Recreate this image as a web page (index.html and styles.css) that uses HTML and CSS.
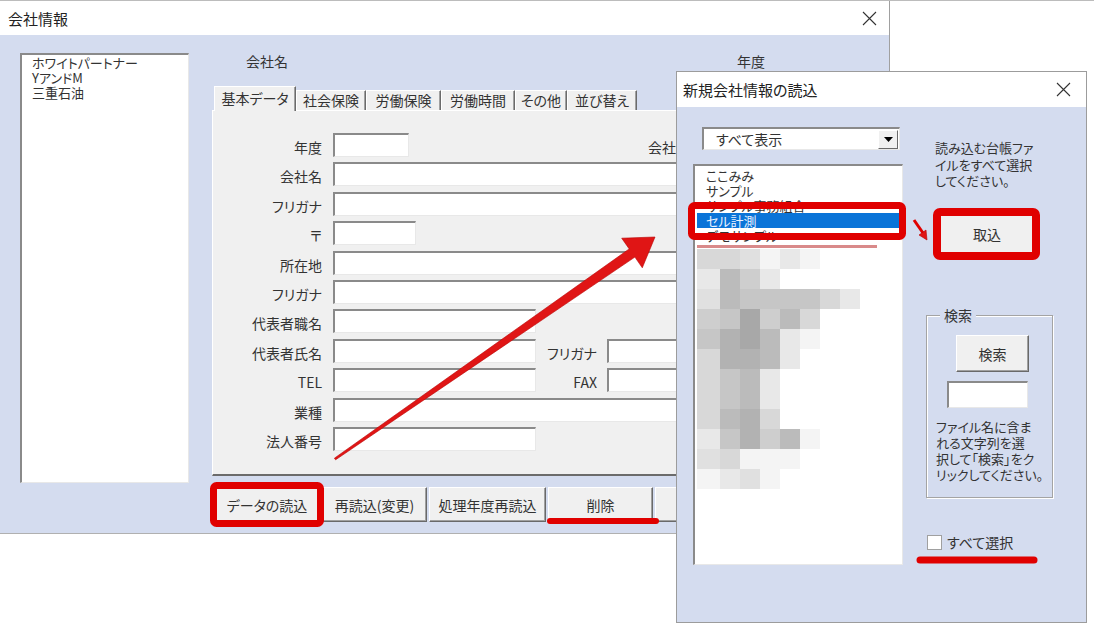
FILE: index.html
```html
<!DOCTYPE html>
<html lang="ja">
<head>
    <meta charset="UTF-8">
    <title>会社情報</title>
    <link rel="stylesheet" href="styles.css">
</head>
<body>
<div class="desktop">

    <!-- main form -->
    <div class="main-win">
        <div class="titlebar">
            <span>会社情報</span>
            <svg class="close" width="15" height="15" viewBox="0 0 15 15"><path d="M1 1L14 14M14 1L1 14"/></svg>
        </div>
        <div class="main-body">
            <div class="listbox company-list">
                <div class="item">ホワイトパートナー</div>
                <div class="item">YアンドM</div>
                <div class="item">三重石油</div>
            </div>
            <div class="main-right">
                <div class="head-row">
                    <span class="head-name">会社名</span>
                    <span>年度</span>
                </div>
                <div class="tabs">
                    <div class="tab active t1">基本データ</div>
                    <div class="tab t2">社会保険</div>
                    <div class="tab t3">労働保険</div>
                    <div class="tab t4">労働時間</div>
                    <div class="tab t5">その他</div>
                    <div class="tab t6">並び替え</div>
                </div>
                <div class="tab-panel">
                    <div class="form">
                        <div class="row"><span class="lbl">年度</span><span class="field w-year"></span><span class="lbl-code">会社コード</span></div>
                        <div class="row"><span class="lbl">会社名</span><span class="field w-full"></span></div>
                        <div class="row"><span class="lbl">フリガナ</span><span class="field w-full"></span></div>
                        <div class="row"><span class="lbl">〒</span><span class="field w-zip"></span></div>
                        <div class="row"><span class="lbl">所在地</span><span class="field w-full"></span></div>
                        <div class="row"><span class="lbl">フリガナ</span><span class="field w-full"></span></div>
                        <div class="row"><span class="lbl">代表者職名</span><span class="field w-mid"></span></div>
                        <div class="row"><span class="lbl">代表者氏名</span><span class="field w-mid"></span><span class="lbl2">フリガナ</span><span class="field w-side"></span></div>
                        <div class="row"><span class="lbl">TEL</span><span class="field w-mid"></span><span class="lbl2">FAX</span><span class="field w-side"></span></div>
                        <div class="row"><span class="lbl">業種</span><span class="field w-full"></span></div>
                        <div class="row"><span class="lbl">法人番号</span><span class="field w-mid"></span></div>
                    </div>
                </div>
                <div class="btn-row">
                    <button class="btn b1">データの読込</button>
                    <button class="btn b2">再読込(変更)</button>
                    <button class="btn b3">処理年度再読込</button>
                    <button class="btn b4">削除</button>
                    <button class="btn b5">終了</button>
                </div>
            </div>
        </div>
    </div>

    <!-- import dialog -->
    <div class="dialog">
        <div class="titlebar dlg-title">
            <span>新規会社情報の読込</span>
            <svg class="close" width="15" height="15" viewBox="0 0 15 15"><path d="M1 1L14 14M14 1L1 14"/></svg>
        </div>
        <div class="dlg-body">
            <div class="dlg-left">
                <div class="combo">
                    <span class="combo-text">すべて表示</span>
                    <span class="combo-btn"><svg width="9" height="5" viewBox="0 0 9 5"><path d="M0 0H9L4.5 5Z"/></svg></span>
                </div>
                <div class="listbox file-list">
                    <div class="item">ここみみ</div>
                    <div class="item">サンプル</div>
                    <div class="item">サンプル事務組合</div>
                    <div class="item selected">セル計測</div>
                    <div class="item">デモサンプル</div>
                    <div class="mosaic">
                        <div class="mrow"><i class="m4"></i><i class="m4"></i><i class="m3"></i><i class="m1"></i><i class="m2"></i><i class="m1"></i></div>
                        <div class="mrow"><i class="m2"></i><i class="m7"></i><i class="m5"></i><i class="m2"></i></div>
                        <div class="mrow"><i class="m3"></i><i class="m7"></i><i class="m6"></i><i class="m6"></i><i class="m6"></i><i class="m6"></i><i class="m4"></i><i class="m2"></i></div>
                        <div class="mrow"><i class="m5"></i><i class="m6"></i><i class="m9"></i><i class="m5"></i><i class="m7"></i><i class="m4"></i></div>
                        <div class="mrow"><i class="m6"></i><i class="m8"></i><i class="m9"></i><i class="m7"></i><i class="m2"></i><i class="m1"></i></div>
                        <div class="mrow"><i class="m4"></i><i class="m8"></i><i class="m8"></i><i class="m7"></i><i class="m2"></i></div>
                        <div class="mrow"><i class="m4"></i><i class="m6"></i><i class="m7"></i><i class="m2"></i></div>
                        <div class="mrow"><i class="m4"></i><i class="m6"></i><i class="m7"></i><i class="m2"></i></div>
                        <div class="mrow"><i class="m4"></i><i class="m7"></i><i class="m8"></i><i class="m4"></i></div>
                        <div class="mrow"><i class="m2"></i><i class="m6"></i><i class="m8"></i><i class="m5"></i><i class="m7"></i><i class="m1"></i></div>
                        <div class="mrow"><i class="m3"></i><i class="m4"></i><i class="m1"></i><i class="m1"></i><i class="m1"></i></div>
                        <div class="mrow"><i class="m1"></i><i class="m2"></i><i class="m3"></i><i class="m1"></i></div>
                    </div>
                </div>
            </div>
            <div class="dlg-right">
                <div class="note">読み込む台帳ファ<br>イルをすべて選択<br>してください。</div>
                <button class="btn btn-import">取込</button>
                <div class="group">
                    <span class="legend">検索</span>
                    <button class="btn btn-search">検索</button>
                    <span class="field search-field"></span>
                    <div class="group-note">ファイル名に含ま<br>れる文字列を選<br>択して「検索」をク<br>リックしてください。</div>
                </div>
                <div class="check-row">
                    <span class="checkbox"></span>
                    <span>すべて選択</span>
                </div>
            </div>
        </div>
    </div>

    <!-- red annotations -->
    <svg class="marks" width="1094" height="629" viewBox="0 0 1094 629">
        <polygon class="arrow" points="334.4,458.2 629.2,248.9 621.7,238.2 655,237 642.3,267.8 634.9,257.1 335.6,459.8"/>
        <rect class="box" x="213.5" y="485.5" width="107" height="38" rx="3"/>
        <line class="under" x1="550" y1="521" x2="656" y2="521"/>
        <rect class="box" x="691.5" y="205.5" width="211" height="31" rx="3"/>
        <rect class="pink" x="697" y="245" width="180" height="3"/>
        <path class="small-arrow" d="M914 220L923 233"/>
        <polygon class="arrow" points="919,235 927,240 926,230"/>
        <rect class="box thick" x="937" y="212" width="99" height="44" rx="3"/>
        <line class="under wide" x1="920" y1="560" x2="1034" y2="560"/>
    </svg>
</div>
</body>
</html>
```

FILE: styles.css
```css
body {
    margin: 0;
    font-family: "Noto Sans CJK JP", "Noto Sans", sans-serif;
    font-feature-settings: "palt";
    color: #333;
}
.desktop {
    position: relative;
    width: 1094px;
    height: 629px;
    box-sizing: border-box;
    border-top: 1px solid #bcbcbc;
    background: #fff;
    overflow: hidden;
}

/* window chrome */
.main-win {
    width: 890px;
    box-sizing: border-box;
    border-right: 1px solid #a0a0a0;
    border-bottom: 1px solid #b0b0b0;
}
.titlebar {
    height: 34px;
    display: flex;
    align-items: center;
    justify-content: space-between;
    padding: 0 12px 0 8px;
    background: #fff;
    font-size: 15px;
    color: #222;
}
.close path {
    stroke: #333;
    stroke-width: 1.1;
    fill: none;
}
.main-body {
    height: 498px;
    box-sizing: border-box;
    display: flex;
    padding: 18px 0 0 20px;
    background: #d4dcef;
}

/* sunken boxes */
.listbox, .field, .combo {
    box-sizing: border-box;
    background: #fff;
    border-top: 2px solid #8a8a8a;
    border-left: 2px solid #8a8a8a;
    border-right: 1px solid #e8e8e8;
    border-bottom: 1px solid #e8e8e8;
}
.item {
    font-size: 13px;
    line-height: 15px;
    white-space: nowrap;
    color: #333;
}
.company-list {
    width: 169px;
    height: 430px;
    padding: 0 0 0 10px;
}

.main-right {
    margin-left: 23px;
    width: 662px;
}
.head-row {
    height: 34px;
    display: flex;
    font-size: 14px;
    line-height: 16px;
}
.head-name {
    width: 525px;
    padding-left: 34px;
    box-sizing: border-box;
}

/* tabs */
.tabs {
    height: 23px;
    display: flex;
    align-items: flex-end;
    padding-left: 2px;
    position: relative;
    z-index: 1;
}
.tab {
    height: 20px;
    box-sizing: border-box;
    background: #f0f0f0;
    border-top: 1px solid #fff;
    border-left: 1px solid #fff;
    border-right: 1px solid #6b6b6b;
    box-shadow: inset -1px 0 #a0a0a0;
    font-size: 14px;
    line-height: 19px;
    text-align: center;
    white-space: nowrap;
}
.tab.active {
    height: 25px;
    margin-bottom: -1px;
    line-height: 22px;
}
.t1 { width: 82px; }
.t2 { width: 70px; }
.t3 { width: 75px; }
.t4 { width: 74px; }
.t5 { width: 52px; }
.t6 { width: 70px; }

.tab-panel {
    height: 366px;
    box-sizing: border-box;
    background: #f0f0f0;
    border-top: 1px solid #fff;
    border-left: 1px solid #fff;
    border-bottom: 2px solid #6b6b6b;
    padding-top: 22px;
}
.form {
    display: grid;
    grid-auto-rows: 24px;
    row-gap: 5.4px;
}
.row {
    display: flex;
    align-items: flex-end;
}
.lbl {
    width: 109px;
    flex-shrink: 0;
    text-align: right;
    font-size: 14px;
    line-height: 20px;
}
.lbl2 {
    width: 61px;
    flex-shrink: 0;
    text-align: right;
    font-size: 14px;
    line-height: 20px;
    margin-right: 10px;
}
.lbl-code {
    margin-left: 239px;
    font-size: 14px;
    line-height: 20px;
    white-space: nowrap;
}
.form .field {
    height: 24px;
    flex-shrink: 0;
}
.lbl + .field { margin-left: 11px; }
.w-year { width: 76px; }
.w-zip { width: 83px; }
.w-mid { width: 203px; }
.w-full { width: 520px; }
.w-side { width: 200px; }

/* buttons */
.btn {
    box-sizing: border-box;
    margin: 0;
    padding: 0;
    background: #f0f0f0;
    border-top: 1px solid #fff;
    border-left: 1px solid #fff;
    border-right: 1px solid #696969;
    border-bottom: 1px solid #696969;
    box-shadow: inset -1px -1px #a0a0a0;
    font-family: inherit;
    font-feature-settings: "palt";
    font-size: 14px;
    color: #333;
    white-space: nowrap;
}
.btn-row {
    margin-top: 11px;
    display: flex;
    gap: 2px;
    padding-left: 2px;
}
.btn-row .btn { height: 35px; }
.b1 { width: 106px; }
.b2 { width: 105px; }
.b3 { width: 117px; }
.b4 { width: 105px; }
.b5 { width: 105px; }

/* dialog */
.dialog {
    position: absolute;
    left: 676px;
    top: 70px;
    width: 411px;
    height: 552px;
    box-sizing: border-box;
    border: 1px solid #9c9c9c;
    display: flex;
    flex-direction: column;
}
.dlg-title {
    height: 35px;
    padding: 0 15px 0 6px;
}
.dlg-body {
    flex: 1;
    display: flex;
    padding-left: 16px;
    background: #d4dcef;
}
.dlg-left {
    width: 210px;
}
.combo {
    margin: 20px 0 0 9px;
    width: 198px;
    height: 23px;
    display: flex;
    align-items: center;
    justify-content: space-between;
    padding-left: 12px;
    font-size: 14px;
}
.combo-btn {
    width: 20px;
    height: 19px;
    box-sizing: border-box;
    background: #f0f0f0;
    border-top: 1px solid #fff;
    border-left: 1px solid #fff;
    border-right: 1px solid #696969;
    border-bottom: 1px solid #696969;
    display: flex;
    align-items: center;
    justify-content: center;
    margin-right: 1px;
}
.combo-btn path { fill: #000; }
.file-list {
    margin-top: 14px;
    width: 210px;
    height: 401px;
    padding-top: 1.5px;
    overflow: hidden;
}
.file-list .item {
    margin: 0 2px;
    padding-left: 9px;
}
.file-list .selected {
    background: #0a74d8;
    color: #eaf2ff;
}
.mosaic {
    margin: 6.5px 0 0 2px;
}
.mrow {
    display: flex;
    height: 20px;
}
.mrow i {
    width: 20px;
    height: 20px;
}
.mrow i:first-child { width: 23px; }
.m1 { background: #f4f4f4; }
.m2 { background: #e8e8e8; }
.m3 { background: #e0e0e0; }
.m4 { background: #d8d8d8; }
.m5 { background: #cecece; }
.m6 { background: #c6c6c6; }
.m7 { background: #bbbbbb; }
.m8 { background: #b2b2b2; }
.m9 { background: #a8a8a8; }

.dlg-right {
    margin-left: 23px;
    width: 127px;
    display: flex;
    flex-direction: column;
}
.note {
    margin-top: 33px;
    padding-left: 9px;
    font-size: 13px;
    line-height: 16.7px;
    white-space: nowrap;
}
.btn-import {
    margin: 24px 0 0 14px;
    width: 94px;
    height: 40px;
}
.group {
    position: relative;
    margin-top: 61px;
    height: 183px;
    box-sizing: border-box;
    border: 1px solid #a4a4a4;
    box-shadow: inset 1px 1px 0 #fff, 1px 1px 0 #fff;
    padding-top: 19px;
    display: flex;
    flex-direction: column;
}
.legend {
    position: absolute;
    top: -10px;
    left: 13px;
    padding: 0 4px;
    background: #d4dcef;
    font-size: 14px;
    line-height: 18px;
}
.btn-search {
    margin-left: 29px;
    width: 73px;
    height: 37px;
}
.search-field {
    margin: 9px 0 0 20px;
    width: 81px;
    height: 27px;
}
.group-note {
    margin-top: 11px;
    padding-left: 9px;
    font-size: 13px;
    line-height: 16px;
    white-space: nowrap;
}
.check-row {
    margin-top: 36px;
    display: flex;
    align-items: center;
    gap: 5px;
    font-size: 14px;
    line-height: 16px;
}
.checkbox {
    width: 15px;
    height: 15px;
    box-sizing: border-box;
    background: #fff;
    border: 1px solid #a0a0a0;
    margin-left: 1px;
}

/* red annotations */
.marks {
    position: absolute;
    left: 0;
    top: -1px;
    pointer-events: none;
}
.arrow {
    fill: #e01515;
    stroke: #b80000;
    stroke-width: 0.6;
    stroke-linejoin: round;
}
.box {
    fill: none;
    stroke: #e00000;
    stroke-width: 7;
}
.box.thick { stroke-width: 8; }
.under {
    stroke: #e00000;
    stroke-width: 6;
    stroke-linecap: round;
}
.under.wide { stroke-width: 7; }
.pink { fill: #d98a8a; }
.small-arrow {
    stroke: #e00000;
    stroke-width: 3;
    fill: none;
}
```
